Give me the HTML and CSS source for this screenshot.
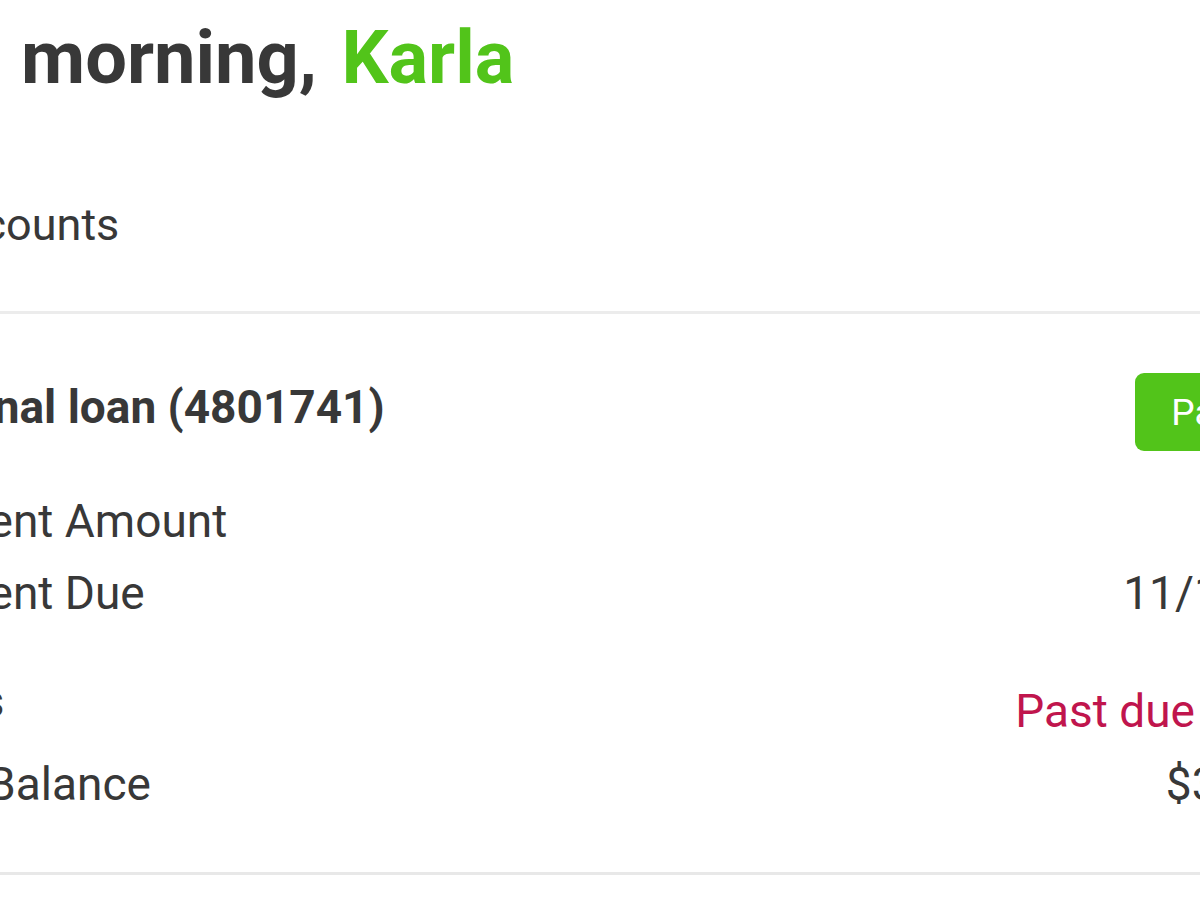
FILE: index.html
```html
<!DOCTYPE html>
<html lang="en">
<head>
<meta charset="utf-8">
<title>Dashboard</title>
<link rel="stylesheet" href="styles.css">
</head>
<body>
<main class="page">
  <h1 class="greeting">Good morning, <span class="greeting-name">Karla</span></h1>
  <h2 class="section-title">Your accounts</h2>
  <section class="card">
    <header class="card-header">
      <h3 class="card-title">Personal loan (4801741)</h3>
      <button class="btn-pay" type="button">Pay today</button>
    </header>
    <dl class="details">
      <div class="row row--amount"><dt>Payment Amount</dt><dd>$125.00</dd></div>
      <div class="row row--due"><dt>Payment Due</dt><dd>11/15/2019</dd></div>
      <div class="row row--status"><dt>Status</dt><dd class="status-past">Past due</dd></div>
      <div class="row row--balance"><dt>Total Balance</dt><dd>$3,421.80</dd></div>
    </dl>
  </section>
</main>
</body>
</html>
```

FILE: styles.css
```css
html, body {
  margin: 0;
  padding: 0;
  background: #ffffff;
  overflow: hidden;
}

body {
  font-family: Roboto, "Noto Sans", "Liberation Sans", sans-serif;
  color: #383838;
}

.page {
  width: 1600px;
  margin-left: -179px;
}

.greeting {
  margin: 21px 0 0;
  font-size: 74px;
  line-height: 1;
  font-weight: 700;
  word-spacing: 6px;
  color: #383838;
}

.greeting-name {
  color: #52c41a;
}

.section-title {
  margin: 107px 0 0 11px;
  font-size: 45px;
  line-height: 1;
  font-weight: 400;
  color: #383838;
}

.card {
  margin-top: 64px;
  border-top: 3px solid #ececec;
  border-bottom: 3px solid #e8e8e8;
  padding: 59px 53px 65px 52px;
}

.card-header {
  display: flex;
  align-items: center;
  justify-content: space-between;
  height: 78px;
}

.card-title {
  margin: 0 0 10px;
  font-size: 46px;
  line-height: 1;
  font-weight: 700;
  color: #383838;
}

.btn-pay {
  height: 78px;
  padding: 0 36px;
  border: none;
  border-radius: 9px;
  background: #52c41a;
  color: #ffffff;
  font-family: inherit;
  font-size: 37px;
  font-weight: 400;
}

.details {
  margin: 0;
}

.row {
  display: flex;
  justify-content: space-between;
  align-items: flex-start;
  font-size: 46px;
  line-height: 1;
}

.row dt, .row dd {
  margin: 0;
}

.row--amount { margin-top: 47px; }
.row--due { margin-top: 26px; }
.row--status { margin-top: 62px; }
.row--balance { margin-top: 27px; }

.row--status dd {
  padding-top: 10px;
}

.status-past {
  color: #c0154d;
}

.row .status-past {
  margin-right: 173px;
}
```
